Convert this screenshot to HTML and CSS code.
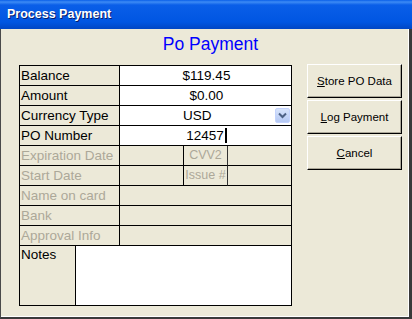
FILE: index.html
```html
<!DOCTYPE html>
<html lang="en">
<head>
	<meta charset="UTF-8">
	<title>Process Payment</title>
	<link rel="stylesheet" href="styles.css">
</head>
<body>
	<div class="window">
		<div class="titlebar">Process Payment</div>
		<div class="content">
			<h1>Po Payment</h1>
			<div class="main">
				<div class="form">
					<div class="row">
						<div class="label">Balance</div>
						<div class="value center">$119.45</div>
					</div>
					<div class="row">
						<div class="label">Amount</div>
						<div class="value center">$0.00</div>
					</div>
					<div class="row">
						<div class="label">Currency Type</div>
						<div class="value select">
							<span class="select-text">USD</span>
							<span class="arrow">
								<svg width="9" height="7" viewBox="0 0 9 7"><path d="M1 1.5 L4.5 5 L8 1.5" fill="none" stroke="#4d6185" stroke-width="2"/></svg>
							</span>
						</div>
					</div>
					<div class="row">
						<div class="label">PO Number</div>
						<div class="value center">12457<span class="caret"></span></div>
					</div>
					<div class="row">
						<div class="label disabled">Expiration Date</div>
						<div class="value off split"></div>
						<div class="value off mini disabled">CVV2</div>
						<div class="value off split"></div>
					</div>
					<div class="row">
						<div class="label disabled">Start Date</div>
						<div class="value off split"></div>
						<div class="value off mini disabled">Issue #</div>
						<div class="value off split"></div>
					</div>
					<div class="row">
						<div class="label disabled">Name on card</div>
						<div class="value off"></div>
					</div>
					<div class="row">
						<div class="label disabled">Bank</div>
						<div class="value off"></div>
					</div>
					<div class="row">
						<div class="label disabled">Approval Info</div>
						<div class="value off"></div>
					</div>
					<div class="row notes">
						<div class="label notes-label">Notes</div>
						<div class="value notes-box"></div>
					</div>
				</div>
				<div class="buttons">
					<button><u>S</u>tore PO Data</button>
					<button><u>L</u>og Payment</button>
					<button><u>C</u>ancel</button>
				</div>
			</div>
		</div>
	</div>
</body>
</html>
```

FILE: styles.css
```css
* {
	box-sizing: border-box;
	padding: 0;
	margin: 0;
}

body {
	font-family: 'Liberation Sans', Arial, sans-serif;
	font-size: 13.5px;
	background: #ECE9D8;
	color: #000;
}

.window {
	width: 412px;
	height: 319px;
	display: flex;
	flex-direction: column;
	background: #ECE9D8;
	border-left: 1px solid #4a4a4a;
	border-right: 3px solid #3a3a3a;
	border-bottom: 2px solid #3a3a3a;
	box-shadow: inset -1px -1px #fff;
}

.titlebar {
	height: 29px;
	margin-left: -1px;
	margin-right: -3px;
	padding: 7px 0 0 7px;
	font-size: 12.5px;
	font-weight: bold;
	color: #fff;
	text-shadow: 1px 1px #0a1e6a;
	background: linear-gradient(180deg, #0a5fe8 0, #3d8bf5 2px, #0a5ee8 5px, #0056e2 22px, #0046c4 29px);
}

.content {
	flex: 1;
	padding: 5px 7px 0 18px;
}

h1 {
	font-size: 17.5px;
	font-weight: normal;
	line-height: 20px;
	color: #0000ff;
	text-align: center;
	margin-bottom: 10px;
}

.main {
	display: flex;
	align-items: flex-start;
	gap: 15px;
}

.form {
	margin-top: 1px;
	width: 273px;
	border-top: 1px solid #000;
	border-left: 1px solid #000;
}

.row {
	display: flex;
	height: 20px;
}

.label,
.value {
	border-right: 1px solid #000;
	border-bottom: 1px solid #000;
	line-height: 19px;
	white-space: nowrap;
	overflow: hidden;
}

.label {
	width: 100px;
	padding-left: 1px;
}

.value {
	width: 172px;
	background: #fff;
}

.value.off {
	background: #ECE9D8;
}

.split {
	width: 64px;
}

.mini {
	width: 44px;
	font-size: 12.5px;
	text-align: center;
	border-right-color: #333;
}

.disabled {
	color: #ACA899;
}

.center {
	display: flex;
	justify-content: center;
	align-items: center;
	padding-left: 2px;
}

.caret {
	width: 2px;
	height: 15px;
	margin-left: 1px;
	background: #000;
}

.select {
	display: flex;
	align-items: center;
	padding-right: 1px;
}

.select-text {
	flex: 1;
	padding-left: 63px;
}

.arrow {
	width: 15px;
	height: 15px;
	display: grid;
	place-items: center;
	background: linear-gradient(180deg, #d8e4fb, #b4c8f4);
	border: 1px solid #c3d3fd;
	border-radius: 2px;
}

.row.notes {
	height: 60px;
}

.notes-label {
	width: 56px;
	line-height: 17px;
}

.notes-box {
	width: 216px;
}

.buttons {
	display: flex;
	flex-direction: column;
	gap: 2px;
}

.buttons button {
	width: 95px;
	height: 34px;
	font-family: 'Liberation Sans', Arial, sans-serif;
	font-size: 11.5px;
	color: #000;
	background: #ECE9D8;
	border: 1px solid;
	border-color: #fff #000 #000 #fff;
	box-shadow: inset -1px -1px #aca899;
}
```
